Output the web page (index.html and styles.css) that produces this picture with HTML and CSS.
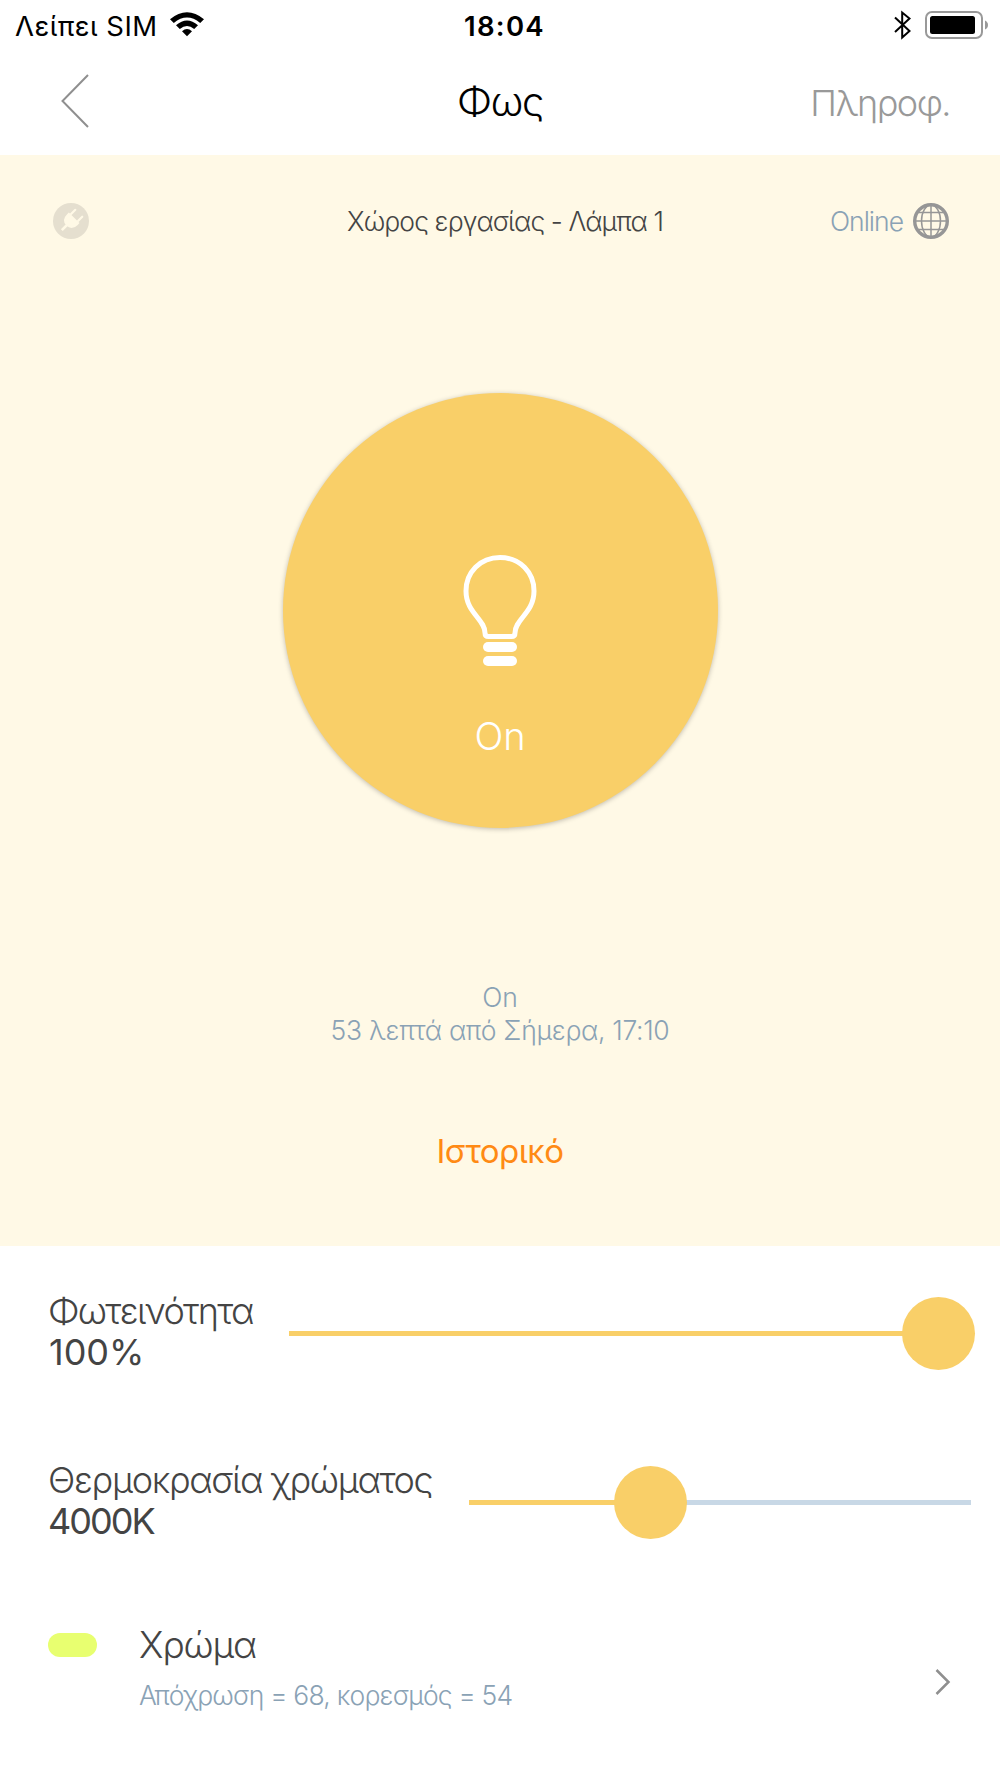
FILE: index.html
```html
<!DOCTYPE html>
<html lang="el">
<head>
    <meta charset="UTF-8">
    <meta name="viewport" content="width=device-width, initial-scale=1.0">
    <title>Φως</title>
    <link rel="stylesheet" href="styles.css">
</head>
<body>
    <div class="status-bar">
        <div class="carrier">
            <span class="carrier-name">Λείπει SIM</span>
            <svg class="wifi" width="34" height="25" viewBox="0 0 34 25">
                <path d="M0 7.2Q17-6.8 34 7.2L30.2 11Q17 .2 3.8 11Z"/>
                <path d="M6 13.2Q17 3.8 28 13.2L24.2 17Q17 11.2 9.8 17Z"/>
                <path d="M12 19.2Q17 15 22 19.2L17 24.3Z"/>
            </svg>
        </div>
        <span class="time">18:04</span>
        <div class="indicators">
            <svg width="17" height="30" viewBox="0 0 17 30">
                <path d="M1 7.5L15.5 21L8.2 27.5V2.5L15.5 8.5L1 22" fill="none" stroke="#000" stroke-width="2"/>
            </svg>
            <svg width="64" height="28" viewBox="0 0 64 28">
                <rect x="1" y="1" width="56" height="26" rx="6" fill="none" stroke="#999" stroke-width="2"/>
                <rect x="5" y="5" width="45" height="18" rx="2.5"/>
                <path d="M60 9.5Q63 11 63 14T60 18.5Z" fill="#999"/>
            </svg>
        </div>
    </div>

    <div class="header">
        <svg class="back" width="30" height="54" viewBox="0 0 30 54">
            <path d="M28 1L2.5 27L28 53" fill="none" stroke="#8f8f8f" stroke-width="2"/>
        </svg>
        <h1>Φως</h1>
        <a class="info">Πληροφ.</a>
    </div>

    <div class="device">
        <div class="device-top">
            <svg class="plug" width="36" height="36" viewBox="0 0 36 36">
                <circle cx="18" cy="18" r="18" fill="#e5dfcf"/>
                <g transform="rotate(45 18 18)" fill="#fff9e6">
                    <path d="M10.5 13.5H25.5V16Q25.5 24.5 18 24.5Q10.5 24.5 10.5 16Z"/>
                    <rect x="12" y="6" width="2.2" height="8" rx="1"/>
                    <rect x="21.8" y="6" width="2.2" height="8" rx="1"/>
                    <rect x="16.7" y="23" width="2.6" height="8"/>
                </g>
            </svg>
            <span class="device-name">Χώρος εργασίας - Λάμπα 1</span>
            <div class="online">
                <span>Online</span>
                <svg width="36" height="36" viewBox="0 0 36 36" fill="none" stroke="#969696">
                    <circle cx="18" cy="18" r="16.3" stroke-width="3.4"/>
                    <ellipse cx="18" cy="18" rx="9.5" ry="16" stroke-width="1.5"/>
                    <path d="M18 2V34M2 18H34M5 9.5H31M5 26.5H31" stroke-width="1.5"/>
                </svg>
            </div>
        </div>

        <div class="lamp">
            <svg class="bulb" width="76" height="114" viewBox="0 0 76 114">
                <path d="M38 3.5C18 3.5 4 18.5 4 37C4 59 23 65 23 79Q23 82.5 26.5 82.5H49.5Q53 82.5 53 79C53 65 72 59 72 37C72 18.5 58 3.5 38 3.5Z" fill="none" stroke="#fff" stroke-width="5"/>
                <rect x="21" y="88" width="34" height="10" rx="5" fill="#fff"/>
                <rect x="21" y="102" width="34" height="10" rx="5" fill="#fff"/>
            </svg>
            <span class="lamp-state">On</span>
        </div>

        <div class="last-change">
            <div class="state">On</div>
            <div class="since">53 λεπτά από Σήμερα, 17:10</div>
        </div>
        <a class="history">Ιστορικό</a>
    </div>

    <div class="control brightness">
        <div class="control-label">
            <div class="name">Φωτεινότητα</div>
            <div class="value">100%</div>
        </div>
        <div class="slider">
            <div class="track"></div>
            <div class="knob"></div>
        </div>
    </div>

    <div class="control temperature">
        <div class="control-label">
            <div class="name">Θερμοκρασία χρώματος</div>
            <div class="value">4000K</div>
        </div>
        <div class="slider">
            <div class="track"></div>
            <div class="knob"></div>
        </div>
    </div>

    <div class="color-row">
        <div class="swatch"></div>
        <div class="color-text">
            <div class="color-name">Χρώμα</div>
            <div class="color-value">Απόχρωση = 68, κορεσμός = 54</div>
        </div>
        <svg class="chevron" width="16" height="28" viewBox="0 0 16 28">
            <path d="M1.5 2L13.5 14L1.5 26" fill="none" stroke="#8f8f8f" stroke-width="2.5"/>
        </svg>
    </div>
</body>
</html>
```
FILE: styles.css
```css
* {
    box-sizing: border-box;
}
body {
    margin: 0;
    height: 1778px;
    overflow: hidden;
    background-color: #fff;
    color: #444;
    font-family: Inter, "Liberation Sans", sans-serif;
    font-weight: 300;
}
svg {
    display: block;
    flex: none;
}
.status-bar {
    display: grid;
    grid-template-columns: 1fr auto 1fr;
    align-items: center;
    height: 51px;
    padding: 0 11px 0 15px;
    color: #000;
    font-size: 27.5px;
    font-weight: 400;
}
.carrier {
    display: flex;
    align-items: center;
    gap: 12px;
}
.carrier-name {
    letter-spacing: 0.5px;
}
.wifi {
    margin-bottom: 2px;
}
.time {
    margin-left: 5px;
    font-weight: 600;
    letter-spacing: 1.3px;
}
.indicators {
    display: flex;
    justify-content: flex-end;
    align-items: center;
    gap: 14px;
    margin-bottom: 2px;
}
.header {
    display: grid;
    grid-template-columns: 1fr auto 1fr;
    align-items: center;
    height: 104px;
    padding: 0 50px;
}
.back {
    margin: 0 0 4px 10px;
}
h1 {
    margin: 0 0 4px;
    color: #000;
    font-size: 40px;
    font-weight: 300;
    letter-spacing: -1.2px;
}
.info {
    justify-self: end;
    color: #999;
    font-size: 36px;
    letter-spacing: -1.5px;
}
.device {
    display: flex;
    flex-direction: column;
    align-items: center;
    height: 1091px;
    background-color: #fff9e6;
}
.device-top {
    display: grid;
    grid-template-columns: 1fr auto 1fr;
    align-items: center;
    width: 100%;
    height: 132px;
    padding: 0 51px 0 53px;
    font-size: 26.5px;
}
.device-name {
    margin-left: 8px;
    letter-spacing: -0.9px;
}
.online {
    display: flex;
    justify-content: flex-end;
    align-items: center;
    gap: 10px;
    color: #8aa2b5;
    letter-spacing: -1px;
}
.lamp {
    display: flex;
    flex-direction: column;
    align-items: center;
    width: 435px;
    height: 435px;
    margin-top: 106px;
    padding-top: 161px;
    border-radius: 50%;
    background-color: #f9cf68;
    box-shadow: 0 1px 5px rgba(0,0,0,0.25);
    color: #fff;
}
.lamp-state {
    margin-top: 45px;
    font-size: 38px;
    line-height: 46px;
}
.last-change {
    margin-top: 153px;
    color: #8aa2b5;
    font-size: 26.5px;
    line-height: 33px;
    text-align: center;
}
.state {
    font-weight: 350;
}
.since {
    letter-spacing: -0.3px;
}
.history {
    margin-top: 84px;
    color: #ff8a14;
    font-size: 33px;
    font-weight: 400;
    line-height: 40px;
    letter-spacing: -0.5px;
}
.control {
    display: flex;
    align-items: center;
    height: 169px;
    padding: 6px 29px 0 48px;
}
.control-label {
    flex: none;
    margin-bottom: 3px;
    font-size: 36px;
    line-height: 41.5px;
}
.value {
    font-weight: 400;
}
.slider {
    position: relative;
    margin-left: auto;
    padding: 34px 0;
}
.track {
    height: 5px;
}
.knob {
    position: absolute;
    top: 0;
    width: 73px;
    height: 73px;
    border-radius: 50%;
    background-color: #f9cf68;
}
.brightness .name {
    letter-spacing: -1.7px;
}
.brightness .value {
    padding-left: 1px;
}
.brightness .slider {
    width: 682px;
}
.brightness .track {
    background-color: #f9cf68;
}
.brightness .knob {
    right: -4px;
}
.temperature .name {
    letter-spacing: -1.35px;
}
.temperature .value {
    letter-spacing: -2px;
}
.temperature .slider {
    width: 502px;
}
.temperature .track {
    background: linear-gradient(to right, #f9cf68 36%, #c8d8e6 36%);
}
.temperature .knob {
    left: 145px;
}
.color-row {
    display: flex;
    align-items: flex-start;
    padding: 38px 49px 0 48px;
}
.swatch {
    width: 49px;
    height: 24px;
    margin-top: 11px;
    border-radius: 12px;
    background-color: #e8ff70;
}
.color-text {
    flex: 1;
    margin-left: 42px;
}
.color-name {
    font-size: 37px;
    line-height: 46px;
    letter-spacing: -1.1px;
}
.color-value {
    margin-top: 11px;
    color: #8aa2b5;
    font-size: 26.5px;
    line-height: 33px;
    letter-spacing: -0.8px;
}
.chevron {
    margin-top: 46px;
}
```
